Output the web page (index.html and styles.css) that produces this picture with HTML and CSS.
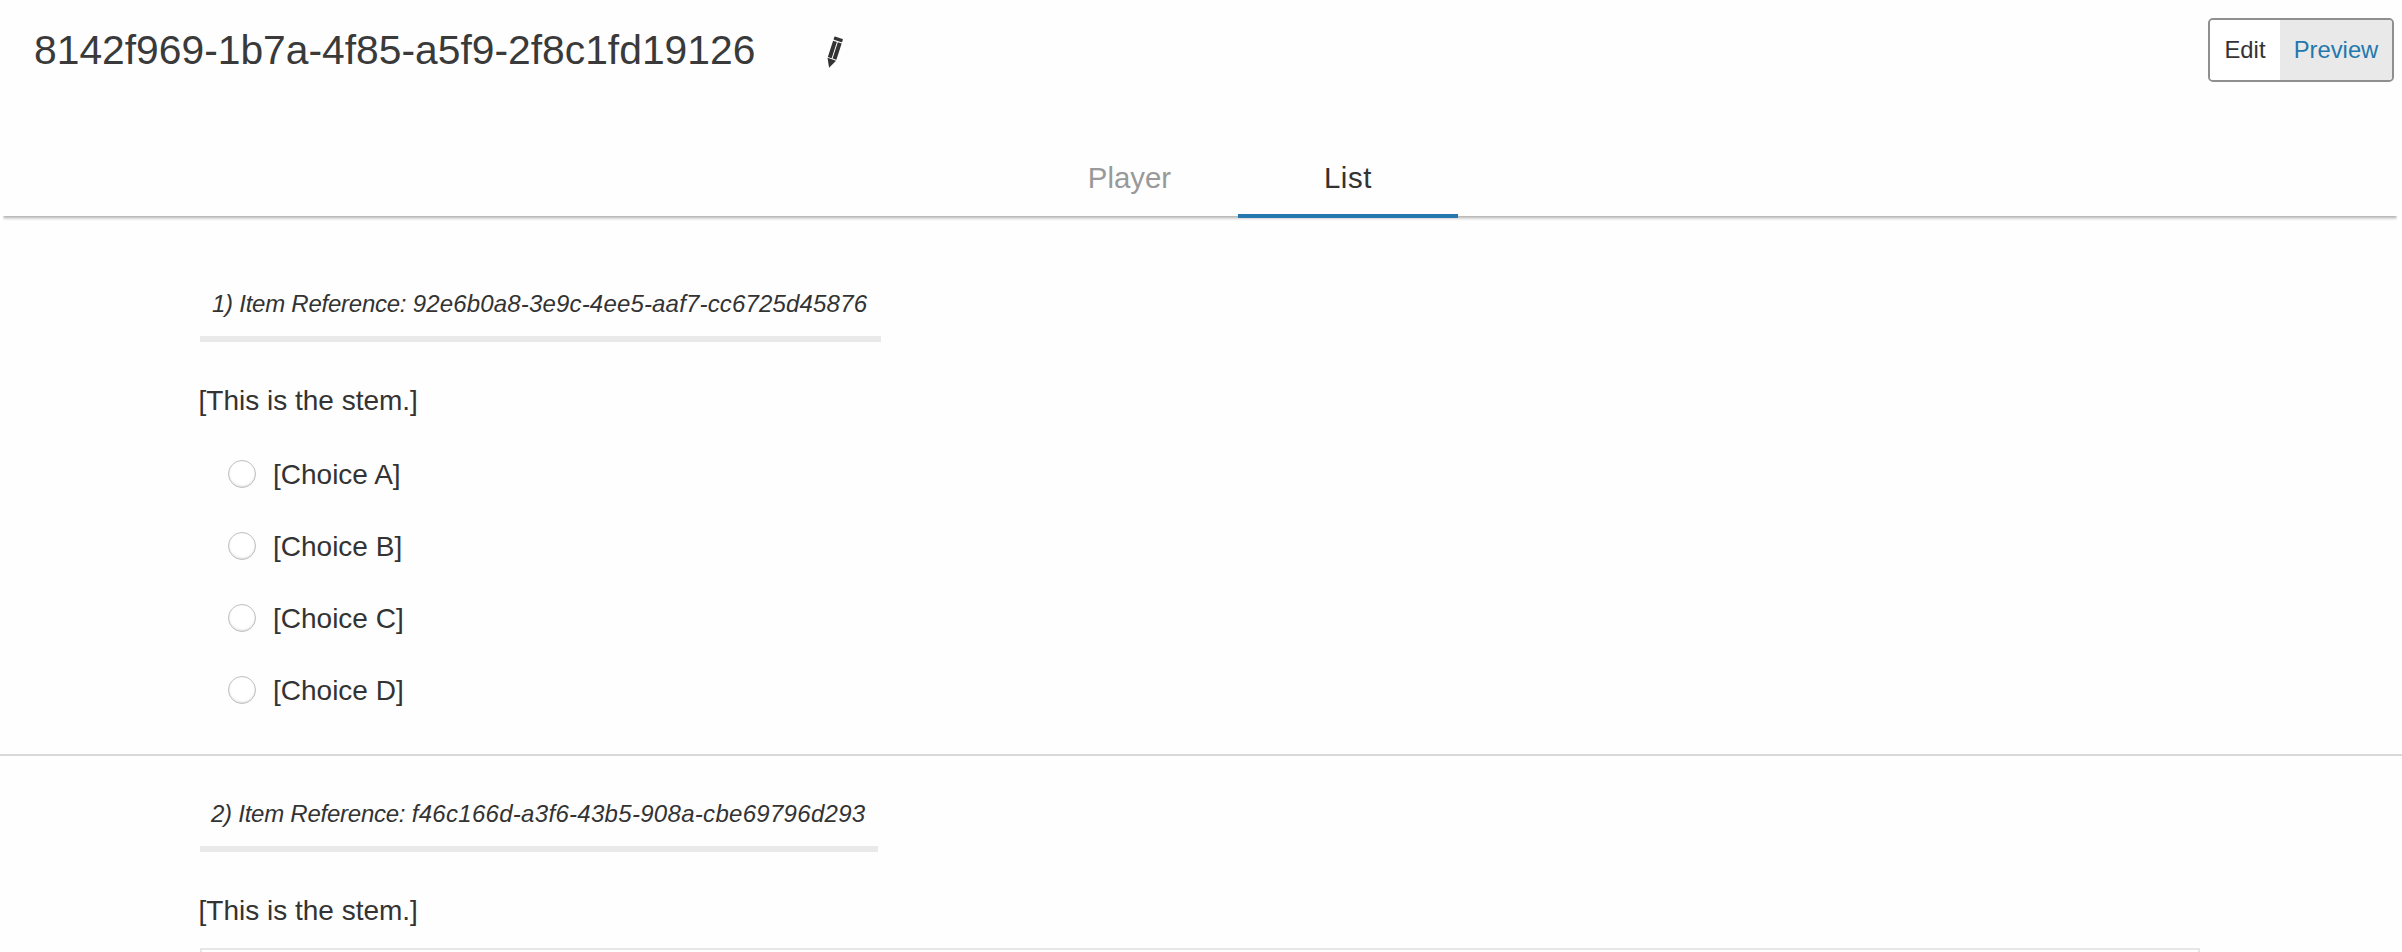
FILE: index.html
```html
<!DOCTYPE html>
<html lang="en">
<head>
<meta charset="utf-8">
<title>Activity preview</title>
<link rel="stylesheet" href="styles.css">
</head>
<body>
<header class="header">
  <div class="topbar">
    <div class="title-wrap">
      <h1 class="title">8142f969-1b7a-4f85-a5f9-2f8c1fd19126</h1>
      <svg class="pencil" viewBox="0 0 18 31" aria-hidden="true">
        <g transform="rotate(18 9 15.5)" fill="#333">
          <rect x="4.5" y="0" width="9" height="3.4" rx="0.6"/>
          <path d="M4.5 4.6h4v17h-4zM9.5 4.6h4v17h-4z"/>
          <path d="M4.5 22.6h9L9 31.5z"/>
        </g>
      </svg>
    </div>
    <div class="mode-switch">
      <button class="mode">Edit</button>
      <button class="mode mode-active">Preview</button>
    </div>
  </div>
  <nav class="tabbar">
    <a class="tab tab-player">Player</a>
    <a class="tab tab-active">List</a>
  </nav>
</header>
<main>
  <section class="item">
    <div class="item-ref"><span class="ref-label">1) Item Reference: </span><span class="uuid">92e6b0a8-3e9c-4ee5-aaf7-cc6725d45876</span></div>
    <p class="stem">[This is the stem.]</p>
    <div class="choices">
      <label class="choice"><input type="radio" name="q1"><span>[Choice A]</span></label>
      <label class="choice"><input type="radio" name="q1"><span>[Choice B]</span></label>
      <label class="choice"><input type="radio" name="q1"><span>[Choice C]</span></label>
      <label class="choice"><input type="radio" name="q1"><span>[Choice D]</span></label>
    </div>
  </section>
  <section class="item item-second">
    <div class="item-ref"><span class="ref-label">2) Item Reference: </span><span class="uuid">f46c166d-a3f6-43b5-908a-cbe69796d293</span></div>
    <p class="stem">[This is the stem.]</p>
    <div class="answer-box"></div>
  </section>
</main>
</body>
</html>
```
FILE: styles.css
```css
* { box-sizing: border-box; }
html, body { margin: 0; height: 952px; overflow: hidden; }
body {
  background: #fefefe;
  color: #333;
  font-family: "Liberation Sans", Arial, sans-serif;
}
.topbar {
  display: flex;
  justify-content: space-between;
  align-items: flex-start;
  padding: 18px 8px 0 34px;
  height: 82px;
}
.title-wrap { display: flex; align-items: center; }
.title {
  margin: 8px 0 0;
  font-size: 40.8px;
  line-height: 48px;
  font-weight: 400;
  color: #3a3a3a;
}
.pencil { width: 18px; height: 31px; margin: 13px 0 0 70px; overflow: visible; }
.mode-switch {
  display: flex;
  height: 64px;
  border: 2px solid #8f8f8f;
  border-radius: 5px;
  overflow: hidden;
}
.mode {
  border: 0;
  background: #fff;
  color: #333;
  font: 400 23.8px "Liberation Sans", Arial, sans-serif;
  width: 70px;
  padding: 0;
}
.mode-active { width: 112px; background: #e9e9e9; color: #2478ad; }
.tabbar {
  display: flex;
  margin: 76px 5px 0 3px;
  padding-left: 1018px;
  height: 58px;
  box-shadow: 0 2px 3px rgba(0, 0, 0, 0.32);
  clip-path: inset(0 0 -12px 0);
}
.tab {
  width: 220px;
  height: 60px;
  text-align: center;
  font-size: 29.4px;
  line-height: 40px;
  color: #999;
}
.tab-player { width: 217px; }
.tab-active { color: #333; border-bottom: 4px solid #2478ad; letter-spacing: 0.6px; }
main { padding-top: 2px; }
.item { padding: 68px 200px 28px; border-bottom: 2px solid #d9d9d9; }
.item-second { padding: 40px 200px 0; border-bottom: 0; }
.item-ref {
  display: table;
  padding: 0 14px 14px 12px;
  border-bottom: 6px solid #e9e9e9;
  font-size: 24px;
  line-height: 36px;
  font-style: italic;
}
.ref-label { letter-spacing: -0.25px; }
.uuid { letter-spacing: 0.17px; }
.item-second .item-ref { padding: 0 12px 14px 11px; }
.item-second .uuid { letter-spacing: 0.3px; }
.stem { margin: 41px 0 19px -1.5px; font-size: 28px; line-height: 36px; }
.choice {
  display: flex;
  align-items: center;
  height: 72px;
  padding-left: 28px;
  font-size: 28px;
}
.choice span { position: relative; top: 0.5px; }
.choice input {
  appearance: none;
  flex: none;
  width: 28px;
  height: 28px;
  margin: 0 17px 0 0;
  border-radius: 50%;
  border: 1.5px solid #bebebe;
  background: #fff;
  box-shadow: inset 0 -1px 2px rgba(0, 0, 0, 0.14);
}
.answer-box { height: 300px; width: 2000px; border: 2px solid #e6e6e6; }
```
